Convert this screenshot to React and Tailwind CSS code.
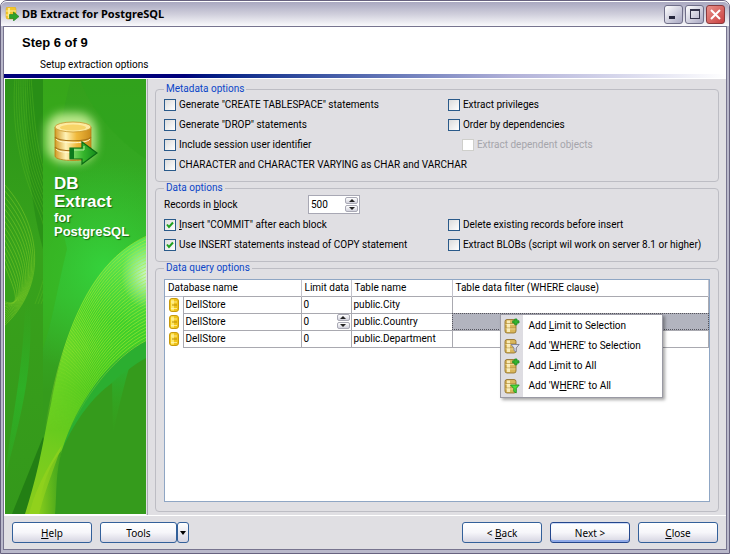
import { useState } from 'react';

const metadataOptions = [
  { label: 'Generate "CREATE TABLESPACE" statements' },
  { label: 'Extract privileges' },
  { label: 'Generate "DROP" statements' },
  { label: 'Order by dependencies' },
  { label: 'Include session user identifier' },
  { label: 'Extract dependent objects', disabled: true, className: 'ml-[14px]' },
  { label: 'CHARACTER and CHARACTER VARYING as CHAR and VARCHAR', className: 'col-span-2' },
];

const dataOptions = [
  { hotkey: 'I', label: 'nsert "COMMIT" after each block', checked: true },
  { label: 'Delete existing records before insert' },
  { label: 'Use INSERT statements instead of COPY statement', checked: true },
  { label: 'Extract BLOBs (script wil work on server 8.1 or higher)' },
];

const rows = [
  { database: 'DellStore', limit: 0, table: 'public.City' },
  { database: 'DellStore', limit: 0, table: 'public.Country', selected: true },
  { database: 'DellStore', limit: 0, table: 'public.Department' },
];

const menuItems = [
  { text: ['Add ', 'L', 'imit to Selection'], icon: 'plus' },
  { text: ["Add '", 'W', "HERE' to Selection"], icon: 'funnel-gray' },
  { text: ['Add L', 'i', 'mit to All'], icon: 'plus' },
  { text: ["Add 'W", 'H', "ERE' to All"], icon: 'funnel-green' },
];

const lerp = (a, b, t) => a + (b - a) * t;

// Lines of the big ribbon, blended from its outer edge to its inner edge
const ribbonLines = Array.from({ length: 32 }, (_, i) => {
  const t = i / 31;
  return `M${lerp(40, 60, t)},${lerp(350, 362, t)} C${lerp(54, 78, t)},${lerp(270, 318, t)} ${lerp(80, 108, t)},${lerp(184, 278, t)} 142,${lerp(157, 261, t)}`;
});

const leftLines = Array.from({ length: 9 }, (_, i) =>
  `M${10 + i * 2},-2 C${6 + i * 3},50 ${16 + i * 2},90 ${32 + i * 3},128 S${44 + i * 3},190 ${30 + i * 3},225`
);

const fanLines = Array.from({ length: 14 }, (_, i) =>
  `M-2,${104 + i * 6} C${34 - i * 2},${142 + i * 5} ${46 - i * 2},${205 + i * 2} -2,${248 - i * 2}`
);

function DatabaseExtractIcon({ className }) {
  return (
    <svg viewBox="0 0 46 46" className={className} aria-hidden="true">
      <defs>
        <linearGradient id="gold" x1="0" x2="1" y1="0" y2="0">
          <stop offset="0" stopColor="#d39a24" />
          <stop offset="0.3" stopColor="#fff3b8" />
          <stop offset="0.6" stopColor="#f0b93c" />
          <stop offset="1" stopColor="#c98c1c" />
        </linearGradient>
        <linearGradient id="arrow" x1="0" x2="1" y1="0" y2="0">
          <stop offset="0" stopColor="#8be070" />
          <stop offset="0.5" stopColor="#35b52c" />
          <stop offset="1" stopColor="#138a1a" />
        </linearGradient>
      </defs>
      <path d="M1,6 V35 C1,41 37,41 37,35 V6 Z" fill="url(#gold)" stroke="#b57c14" strokeWidth="0.8" />
      <path d="M1,16 C4,21 34,21 37,16 M1,26 C4,31 34,31 37,26" fill="none" stroke="#a8721a" strokeWidth="1.2" />
      <path d="M2,18 C5,23 33,23 36,18 M2,28 C5,33 33,33 36,28" fill="none" stroke="#fff6cc" />
      <ellipse cx="19" cy="6" rx="18" ry="5" fill="#fdeaa0" stroke="#c8952c" strokeWidth="0.8" />
      <ellipse cx="19" cy="6.5" rx="13" ry="3" fill="#f7d468" />
      <path d="M16,27 H28 V21 L43,32 L28,43 V38 H16 Z" fill="url(#arrow)" stroke="#0b6b14" strokeWidth="1.2" />
      <path d="M18,29 H30 V25" fill="none" stroke="#b9f0a5" />
      <path d="M16,27 H20 V38 H16 Z" fill="#0c7a1c" />
    </svg>
  );
}

function TitleIcon() {
  return (
    <svg viewBox="0 0 14 14" className="h-[14px] w-[14px]" aria-hidden="true">
      <path d="M1,2 Q1,0 3,0 H9 Q11,0 11,2 V10 Q11,12 9,12 H3 Q1,12 1,10 Z" fill="#f3c62b" stroke="#d9a415" strokeWidth="0.5" />
      <path d="M3,1 H5 V11 H3 Z" fill="#ffe98a" />
      <path d="M1,4 H11 M1,8 H11" stroke="#fff0a0" />
      <path d="M4.5,7.5 H8.5 V5 L14,9.5 L8.5,14 V11.5 H4.5 Z" fill="#2fa32a" stroke="#1d7a1d" strokeWidth="0.6" />
    </svg>
  );
}

function RowIcon() {
  return (
    <svg viewBox="0 0 10 14" className="mx-auto h-[14px] w-[10px]" aria-hidden="true">
      <rect x="0.5" y="0.5" width="9" height="13" rx="2.5" fill="#f0c419" stroke="#c79a0c" />
      <rect x="2" y="1.5" width="3" height="11" fill="#fde96b" />
      <path d="M3,7 H8" stroke="#b98c08" />
      <path d="M2,4 H8 M2,10.5 H8" stroke="#fff7c0" strokeWidth="0.7" />
    </svg>
  );
}

function MenuIcon({ type }) {
  return (
    <svg viewBox="0 0 16 16" className="h-4 w-4" aria-hidden="true">
      <path d="M1,3.5 Q1,1.5 3,1.5 H10 Q12,1.5 12,3.5 V13 Q12,15 10,15 H3 Q1,15 1,13 Z" fill="#d9b65c" stroke="#8b6a22" strokeWidth="0.8" />
      <path d="M3,2.5 H6 V14 H3 Z" fill="#f8eab8" />
      <path d="M2,5.5 H12 M2,10 H12" stroke="#a37f2c" strokeWidth="0.6" />
      <path d="M1.5,6.4 H11.5 M1.5,10.9 H11.5" stroke="#fff4c8" strokeWidth="0.6" />
      {type === 'plus' && (
        <path d="M10.7,1 H13 V2.8 H15 V5 H13 V6.8 H10.7 V5 H8.7 V2.8 H10.7 Z" fill="#35b52f" stroke="#1d8a22" strokeWidth="0.8" strokeLinejoin="round" />
      )}
      {type === 'funnel-gray' && (
        <path d="M7,6.5 H15.2 L12.2,10 V14 L10,12.5 V10 Z" fill="#dfe1ec" stroke="#7a7e94" strokeWidth="0.9" />
      )}
      {type === 'funnel-green' && (
        <path d="M6.5,7 H15.2 L12.2,10.5 V15 L9.8,13.5 V10.5 Z" fill="#4fe03c" stroke="#1f8f22" strokeWidth="0.9" />
      )}
    </svg>
  );
}

function CheckOption({ hotkey, label, checked = false, disabled = false, className = '' }) {
  return (
    <label className={`flex items-center gap-[3px] ${disabled ? 'text-[#a5a5ab]' : ''} ${className}`}>
      <span className="relative flex h-3 w-3 shrink-0">
        <input
          type="checkbox"
          defaultChecked={checked}
          disabled={disabled}
          className="peer h-3 w-3 appearance-none border border-[#2a5a8a] bg-linear-to-br from-[#dcdcdc] to-white disabled:border-[#cfcfcb] disabled:from-white"
        />
        <svg viewBox="0 0 12 12" className="pointer-events-none absolute inset-0 hidden h-3 w-3 peer-checked:block">
          <path d="M3,5.5 L5,8 L9,3.5" fill="none" stroke="#21a121" strokeWidth="2" />
        </svg>
      </span>
      <span className="whitespace-nowrap">
        {hotkey && <u>{hotkey}</u>}
        {label}
      </span>
    </label>
  );
}

function Spinner({ onUp, onDown }) {
  const button = 'flex h-[7px] w-[13px] items-center justify-center rounded-[2px] border border-[#a9a9b5] bg-linear-to-b from-white to-[#d2d2dc]';
  return (
    <span className="flex flex-col gap-px">
      <button type="button" aria-label="Increase" onClick={onUp} className={button}>
        <svg viewBox="0 0 6 3" className="h-[3px] w-[6px]"><path d="M0,3 L3,0 L6,3 Z" fill="#222" /></svg>
      </button>
      <button type="button" aria-label="Decrease" onClick={onDown} className={button}>
        <svg viewBox="0 0 6 3" className="h-[3px] w-[6px]"><path d="M0,0 L3,3 L6,0 Z" fill="#222" /></svg>
      </button>
    </span>
  );
}

function Group({ title, className = '', children }) {
  return (
    <fieldset className={`min-w-0 rounded-[4px] border border-[#bdbdc4] px-2 ${className}`}>
      <legend className="px-[2px] leading-3 text-[#0b46c8]">{title}</legend>
      {children}
    </fieldset>
  );
}

function PushButton({ children, primary = false }) {
  return (
    <button
      type="button"
      className={`h-[21px] w-[80px] rounded-[3px] border bg-linear-to-b from-white via-[#f6f6fa] to-[#d6d5e2] ${
        primary ? 'border-[#23468c] shadow-[inset_0_-2px_0_#8fa9e8,inset_0_1px_0_#cfdcf8]' : 'border-[#33609a]'
      }`}
    >
      {children}
    </button>
  );
}

function Sidebar() {
  return (
    <aside className="relative w-[142px] shrink-0 overflow-hidden border-b border-l border-white bg-[#359b1c]">
      <svg viewBox="0 0 141 435" preserveAspectRatio="none" className="absolute inset-0 h-full w-full" aria-hidden="true">
        <defs>
          <linearGradient id="base" x1="0" y1="0" x2="0" y2="1">
            <stop offset="0" stopColor="#35a01b" />
            <stop offset="0.25" stopColor="#33ab24" />
            <stop offset="0.5" stopColor="#35b028" />
            <stop offset="0.72" stopColor="#359b1c" />
            <stop offset="1" stopColor="#359b1c" />
          </linearGradient>
          <linearGradient id="left" x1="0" y1="0" x2="0" y2="1">
            <stop offset="0" stopColor="#2c9318" />
            <stop offset="0.4" stopColor="#37a31c" />
            <stop offset="0.6" stopColor="#379e1b" />
            <stop offset="1" stopColor="#34981b" />
          </linearGradient>
          <radialGradient id="bright" gradientUnits="userSpaceOnUse" cx="100" cy="190" r="110">
            <stop offset="0" stopColor="#35d23c" />
            <stop offset="1" stopColor="#35c832" stopOpacity="0" />
          </radialGradient>
          <linearGradient id="ribbon" gradientUnits="userSpaceOnUse" x1="130" y1="180" x2="35" y2="420">
            <stop offset="0" stopColor="#5ce456" />
            <stop offset="0.25" stopColor="#3ecf2c" />
            <stop offset="0.55" stopColor="#4cc81e" />
            <stop offset="0.8" stopColor="#72cc1e" />
            <stop offset="1" stopColor="#86cc1c" />
          </linearGradient>
          <linearGradient id="ribbonStroke" gradientUnits="userSpaceOnUse" x1="0" y1="270" x2="0" y2="352">
            <stop offset="0" stopColor="#b4ee30" />
            <stop offset="1" stopColor="#a4e428" stopOpacity="0" />
          </linearGradient>
          <radialGradient id="shine" cx="0.5" cy="0.5" r="0.5">
            <stop offset="0" stopColor="#fff" stopOpacity="0.7" />
            <stop offset="1" stopColor="#fff" stopOpacity="0" />
          </radialGradient>
          <linearGradient id="teal" x1="0" y1="0" x2="0" y2="1">
            <stop offset="0" stopColor="#2cb428" stopOpacity="0" />
            <stop offset="0.5" stopColor="#2cb428" stopOpacity="0.8" />
            <stop offset="1" stopColor="#2cb428" stopOpacity="0.3" />
          </linearGradient>
          <linearGradient id="spike" x1="0" y1="0" x2="0" y2="1">
            <stop offset="0" stopColor="#2bae30" />
            <stop offset="1" stopColor="#35a81c" stopOpacity="0" />
          </linearGradient>
          <linearGradient id="tailEdge" gradientUnits="userSpaceOnUse" x1="34" y1="0" x2="58" y2="0">
            <stop offset="0" stopColor="#359b1c" stopOpacity="0" />
            <stop offset="1" stopColor="#359b1c" stopOpacity="0.9" />
          </linearGradient>
          <clipPath id="leftClip"><rect width="38" height="435" /></clipPath>
        </defs>
        <rect width="141" height="435" fill="url(#base)" />
        <path d="M75,0 H141 V80 C110,60 85,30 75,0 Z" fill="#2fa31c" opacity="0.6" />
        <rect width="141" height="310" fill="url(#bright)" />
        <path d="M38,0 H66 C50,60 48,110 62,170 C52,210 48,240 38,270 Z" fill="#3aae18" opacity="0.45" />
        <rect width="38" height="435" fill="url(#left)" />
        <path d="M23,0 H38 V170 C24,120 20,60 23,0 Z" fill="#278c16" opacity="0.7" />
        <g clipPath="url(#leftClip)" fill="none" strokeWidth="0.8">
          {leftLines.map((d) => <path key={d} d={d} stroke="#5cbc22" opacity="0.45" />)}
          {fanLines.map((d) => <path key={d} d={d} stroke="#8ed42a" opacity="0.55" />)}
        </g>
        <path d="M25,225 C28,290 18,330 1,395 C4,350 18,300 20,225 Z" fill="url(#teal)" />
        <path d="M38,358 L44,375 L20,435 H7 Z" fill="#237f14" />
        {/* ground under the ribbon */}
        <path d="M141,258 C100,280 72,325 57,371 L44,435 H141 Z" fill="#359b1c" />
        <path d="M141,258 C100,280 72,325 57,371 C72,338 88,318 107,304 C116,296 128,286 141,279 Z" fill="#2bae30" />
        <path d="M107,303 C113,297 118,293 124,289 C118,310 112,335 108,356 Z" fill="url(#spike)" />
        <path d="M20,435 C36,385 38,360 46,325 C58,262 80,184 141,158 V261 C100,282 72,325 57,371 C50,395 52,415 50,435 Z" fill="url(#ribbon)" />
        <path d="M57,371 C44,385 36,410 32,435 H52 C52,410 53,390 57,371 Z" fill="url(#tailEdge)" />
        <path d="M24,435 C32,405 46,382 57,366 C48,392 40,412 34,435 Z" fill="#9ad61e" opacity="0.55" />
        <ellipse cx="142" cy="196" rx="26" ry="34" fill="url(#shine)" />
        <g fill="none" stroke="url(#ribbonStroke)" strokeWidth="0.8" opacity="0.7">
          {ribbonLines.map((d) => <path key={d} d={d} />)}
        </g>
      </svg>
      <div className="relative px-[45px] pt-[38px]">
        <div className="relative w-[52px] pl-1 pt-1">
          <span className="absolute -left-1 -top-1 h-[50px] w-[50px] rounded-[18px] bg-[#e8ffb0]/75 blur-[5px]" />
          <DatabaseExtractIcon className="relative h-[46px] w-[46px]" />
        </div>
        <h2 className="mt-2 pl-1 font-bold text-white [text-shadow:1px_1px_1px_#1a6a10]">
          <span className="block text-[17px] leading-[18px]">DB</span>
          <span className="block text-[17px] leading-[18px]">Extract</span>
          <span className="block text-[13px] leading-[14px]">for</span>
          <span className="block text-[13px] leading-[14px]">PostgreSQL</span>
        </h2>
      </div>
    </aside>
  );
}

function ContextMenu() {
  return (
    <ul
      role="menu"
      className="absolute left-[47px] top-0 z-10 w-[163px] border border-[#9a9aa4] bg-linear-to-r from-[#dedde2] from-[22px] to-white to-[22px] py-px shadow-[2px_2px_3px_rgba(0,0,0,0.35)]"
    >
      {menuItems.map(({ text, icon }) => (
        <li key={text.join('')} role="none">
          <button type="button" role="menuitem" className="flex h-5 w-full items-center gap-[9px] pl-[3px] text-left">
            <MenuIcon type={icon} />
            <span className="whitespace-nowrap">{text[0]}<u>{text[1]}</u>{text[2]}</span>
          </button>
        </li>
      ))}
    </ul>
  );
}

export default function App() {
  const [records, setRecords] = useState(500);
  const [limit, setLimit] = useState(0);

  return (
    <div className="flex min-h-screen flex-col rounded-t-[7px] border border-[#67627f] bg-[#b9b8ca] font-[Roboto,sans-serif] text-[10px] leading-3 text-black">
      {/* Title bar */}
      <header className="flex h-[25px] shrink-0 items-center rounded-t-[6px] border-t border-white bg-linear-to-b from-[#a9a8c0] via-[#cfcedb] to-[#fafafc] px-1">
        <TitleIcon />
        <h1 className="ml-[3px] flex-1 font-['Noto_Sans',sans-serif] text-[11px] font-bold">DB Extract for PostgreSQL</h1>
        <div className="flex gap-[2px]">
          <button type="button" aria-label="Minimize" className="flex h-[19px] w-[19px] items-end rounded-[3px] border border-[#6f6e88] bg-linear-to-br from-white to-[#a9a8c2] p-1">
            <span className="h-[3px] w-[6px] bg-[#26263c]" />
          </button>
          <button type="button" aria-label="Maximize" className="flex h-[19px] w-[19px] items-center justify-center rounded-[3px] border border-[#6f6e88] bg-linear-to-br from-white to-[#a9a8c2]">
            <span className="h-[10px] w-[10px] border border-t-2 border-[#33334a]" />
          </button>
          <button type="button" aria-label="Close window" className="flex h-[19px] w-[19px] items-center justify-center rounded-[3px] border border-[#8a3a3c] bg-linear-to-br from-[#e8908a] to-[#c83c40]">
            <svg viewBox="0 0 11 11" className="h-[11px] w-[11px]"><path d="M1,1 L10,10 M10,1 L1,10" stroke="#fff" strokeWidth="2" /></svg>
          </button>
        </div>
      </header>

      <div className="mx-[2px] mb-[3px] flex flex-1 flex-col border border-[#77748f] bg-[#e0dfe3]">
        {/* Wizard step */}
        <div className="h-[47px] shrink-0 bg-white pl-[18px] pt-2">
          <p className="font-['Liberation_Sans',sans-serif] text-[13px] font-bold leading-4">Step 6 of 9</p>
          <p className="mt-2 pl-[18px]">Setup extraction options</p>
        </div>
        <div className="h-1 shrink-0 bg-linear-to-r from-[#00007b] from-25% via-[#b0b0d8] via-70% to-white" />

        <main className="flex flex-1 border-t border-white">
          <div className="flex border-r border-[#a9a9b2] pr-px font-['Liberation_Sans',sans-serif]">
            <Sidebar />
          </div>

          <div className="flex min-w-0 flex-1 flex-col px-[7px] pb-[3px] pt-1">
            <Group title="Metadata options" className="pb-[6px]">
              <div className="grid grid-cols-[52%_1fr] auto-rows-[20px]">
                {metadataOptions.map((option) => <CheckOption key={option.label} {...option} />)}
              </div>
            </Group>

            <Group title="Data options" className="pb-[6px]">
              <div className="flex h-[21px] items-center">
                <label htmlFor="records" className="w-[144px]">Records in <u>b</u>lock</label>
                <span className="flex h-[19px] w-[52px] items-center border border-[#a8a8b4] bg-white pr-px">
                  <input
                    id="records"
                    value={records}
                    onChange={(e) => setRecords(Number(e.target.value) || 0)}
                    className="w-0 min-w-0 flex-1 pl-[2px] outline-none"
                  />
                  <Spinner onUp={() => setRecords(records + 1)} onDown={() => setRecords(Math.max(0, records - 1))} />
                </span>
              </div>
              <div className="grid grid-cols-[52%_1fr] auto-rows-[20px]">
                {dataOptions.map((option) => <CheckOption key={option.label} {...option} />)}
              </div>
            </Group>

            <Group title="Data query options" className="flex flex-1 flex-col pb-[9px]">
              <div className="mt-[5px] flex-1 border border-[#8fa6c4] bg-white">
                <table className="w-full table-fixed border-collapse text-left">
                  <colgroup>
                    <col className="w-[18px]" />
                    <col className="w-[118px]" />
                    <col className="w-[50px]" />
                    <col className="w-[101px]" />
                    <col />
                  </colgroup>
                  <thead>
                    <tr className="h-4 border-b border-[#b8bccb]">
                      <th colSpan={2} className="border-r border-[#c3c3cc] p-0 pl-[3px] font-normal">Database name</th>
                      <th className="border-r border-[#c3c3cc] p-0 pl-[3px] font-normal">Limit data</th>
                      <th className="border-r border-[#c3c3cc] p-0 pl-[3px] font-normal">Table name</th>
                      <th className="border-r border-[#c3c3cc] p-0 pl-[3px] font-normal">Table data filter (WHERE clause)</th>
                    </tr>
                  </thead>
                  <tbody>
                    {rows.map((row) => (
                      <tr key={row.table} className="h-[17px]">
                        <td className="p-0"><RowIcon /></td>
                        <td className="border border-[#a9a9b0] p-0 pl-[2px]">{row.database}</td>
                        <td className="border border-[#a9a9b0] p-0 pl-[2px]">
                          <div className="flex items-center justify-between pr-px">
                            {row.selected ? limit : row.limit}
                            {row.selected && (
                              <span className="-my-2">
                                <Spinner onUp={() => setLimit(limit + 1)} onDown={() => setLimit(Math.max(0, limit - 1))} />
                              </span>
                            )}
                          </div>
                        </td>
                        <td className="border border-[#a9a9b0] p-0 pl-[2px]">{row.table}</td>
                        <td className={`relative border border-[#a9a9b0] p-0 ${row.selected ? 'bg-[#b2b4bf] outline-1 -outline-offset-1 outline-dotted outline-[#55555f]' : ''}`}>
                          {row.selected && <ContextMenu />}
                        </td>
                      </tr>
                    ))}
                  </tbody>
                </table>
              </div>
            </Group>
          </div>
        </main>

        <footer className="flex h-[34px] shrink-0 items-center border-t border-white px-2 font-['Noto_Sans',sans-serif]">
          <PushButton><u>H</u>elp</PushButton>
          <div className="ml-2 flex">
            <button type="button" className="h-[21px] w-[77px] rounded-[3px] border border-[#33609a] bg-linear-to-b from-white via-[#f6f6fa] to-[#d6d5e2]">Tools</button>
            <button type="button" aria-label="Open tools menu" className="flex h-[21px] w-3 items-center justify-center rounded-[3px] border border-[#33609a] bg-linear-to-b from-white to-[#d6d5e2]">
              <svg viewBox="0 0 6 4" className="h-1 w-[6px]"><path d="M0,0 H6 L3,4 Z" fill="#000" /></svg>
            </button>
          </div>
          <div className="ml-auto flex gap-2">
            <PushButton>&lt; <u>B</u>ack</PushButton>
            <PushButton primary>Next &gt;</PushButton>
            <PushButton><u>C</u>lose</PushButton>
          </div>
        </footer>
      </div>
    </div>
  );
}
